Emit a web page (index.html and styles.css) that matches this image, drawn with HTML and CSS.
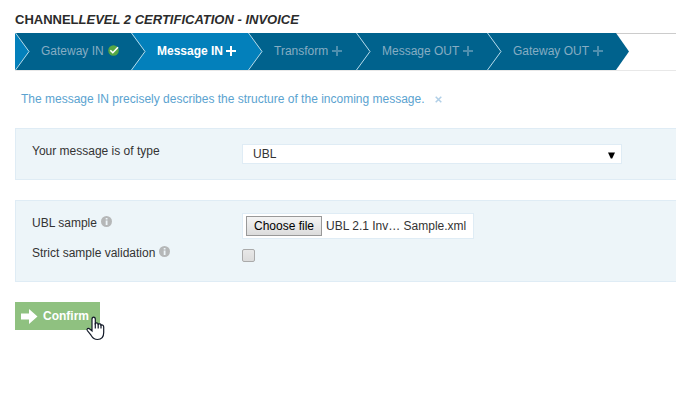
FILE: index.html
```html
<!DOCTYPE html>
<html lang="en">
<head>
<meta charset="utf-8">
<title>Channel</title>
<link rel="stylesheet" href="styles.css">
</head>
<body>
<h1 class="title"><span class="title-kind">CHANNEL</span><em>LEVEL 2 CERTIFICATION - INVOICE</em></h1>
<nav class="steps">
  <div class="step step-gin"><svg class="chevron" viewBox="0 0 15 37"><path class="fill" d="M0 0 14 18.5 0 37z"/><path class="edge" d="M.5 0 14 18.5.5 37"/></svg><span>Gateway IN</span>
    <svg class="check" viewBox="0 0 11 11"><circle cx="5.5" cy="5.5" r="5.3" fill="#56a744"/><path d="M2.3 5.2 4.8 7.7 10 2.3" fill="none" stroke="#fff" stroke-width="1.6"/></svg></div>
  <div class="step step-min active"><svg class="chevron" viewBox="0 0 15 37"><path class="fill" d="M0 0 14 18.5 0 37z"/><path class="edge" d="M.5 0 14 18.5.5 37"/></svg><span>Message IN</span>
    <svg class="plus" viewBox="0 0 10 10"><path d="M5 0v10M0 5h10"/></svg></div>
  <div class="step step-tr"><svg class="chevron" viewBox="0 0 15 37"><path class="fill" d="M0 0 14 18.5 0 37z"/><path class="edge" d="M.5 0 14 18.5.5 37"/></svg><span>Transform</span>
    <svg class="plus" viewBox="0 0 10 10"><path d="M5 0v10M0 5h10"/></svg></div>
  <div class="step step-mout"><svg class="chevron" viewBox="0 0 15 37"><path class="fill dark" d="M0 0 14 18.5 0 37z"/><path class="edge" d="M.5 0 14 18.5.5 37"/></svg><span>Message OUT</span>
    <svg class="plus" viewBox="0 0 10 10"><path d="M5 0v10M0 5h10"/></svg></div>
  <div class="step step-gout"><svg class="chevron" viewBox="0 0 15 37"><path class="fill dark" d="M0 0 14 18.5 0 37z"/><path class="edge" d="M.5 0 14 18.5.5 37"/></svg><span>Gateway OUT</span>
    <svg class="plus" viewBox="0 0 10 10"><path d="M5 0v10M0 5h10"/></svg></div>
  <svg class="tip" viewBox="0 0 14 37"><path d="M0 0 13 18.5 0 37z" fill="#00628d"/></svg>
</nav>
<p class="hint"><span class="hint-text">The message IN precisely describes the structure of the incoming message.</span><svg class="close" viewBox="0 0 7 7"><path d="M.7.7 6.3 6.3M6.3.7.7 6.3"/></svg></p>
<section class="panel panel-type">
  <span class="label label-type">Your message is of type</span>
  <div class="select"><span>UBL</span><svg class="caret" viewBox="0 0 7 7"><path d="M0 .5h7L4.2 6.5H2.8z"/></svg></div>
</section>
<section class="panel panel-sample">
  <div class="row row-file">
    <span class="label"><span class="label-ubl">UBL sample</span><svg class="info" viewBox="0 0 11 11"><circle cx="5.5" cy="5.5" r="5.5" fill="#b5b7b8"/><path d="M4.7 2h1.8v1.5H4.700zM4.700 4.500h1.800V9H4.700z" fill="#edf5f9"/></svg></span>
    <div class="file"><span class="file-button">Choose file</span><span class="file-name">UBL 2.1 Inv… Sample.xml</span></div>
  </div>
  <div class="row row-strict">
    <span class="label"><span class="label-strict">Strict sample validation</span><svg class="info" viewBox="0 0 11 11"><circle cx="5.5" cy="5.5" r="5.5" fill="#b5b7b8"/><path d="M4.7 2h1.8v1.5H4.700zM4.700 4.500h1.800V9H4.700z" fill="#edf5f9"/></svg></span>
    <span class="checkbox"></span>
  </div>
</section>
<div class="confirm"><svg class="arrow" viewBox="0 0 17 15"><path d="M0 4.5h8V0l8.500 7.500L8 15v-4.500H0z" fill="#fff"/></svg><span>Confirm</span>
  <svg class="cursor" viewBox="0 0 19 25"><path d="M6 15V3.200C6 .3 9.300.3 9.300 3.200V7.500C10.500 6.500 12 7 12.200 8.200 13.500 7.400 14.800 8 15 9.100 16.500 8.500 17.700 9.300 17.700 11V16.500C17.700 20.800 15.500 23.500 11.500 23.500 8 23.500 6.500 21.800 5 19.200L1.300 14.500C.3 12.800 2.300 11.500 3.800 13z" fill="#fff" stroke="#111827" stroke-width="1.2"/><path d="M9.300 7v5.500M12.200 8v4.500M15 9v3.500" fill="none" stroke="#111827" stroke-width="1.200"/></svg></div>
</body>
</html>
```
FILE: styles.css
```css
* { box-sizing: border-box; }
body {
  margin: 0;
  min-height: 402px;
  padding: 10px 0 0 15px;
  background: #fff;
  color: #333;
  font: 12px/16px "Liberation Sans", Arial, sans-serif;
  white-space: nowrap;
}
svg { display: block; flex: none; overflow: visible; }
.title { margin: 0; height: 23px; font: bold 13px/19px "Liberation Sans", Arial, sans-serif; color: #2b2b2b; }
.steps { display: flex; height: 38px; border-top: 1px solid #ccc; border-bottom: 1px solid #e8e8e8; }
.step {
  position: relative;
  display: flex;
  align-items: center;
  height: 37px;
  margin-top: -1px;
  padding-bottom: 2px;
  padding-left: 26px;
  background: #00628d;
  color: #86adc3;
}
.chevron { position: absolute; left: 0; top: 0; width: 15px; height: 37px; }
.fill { fill: #0380bb; }
.step-min .fill, .fill.dark { fill: #00628d; }
.edge { fill: none; stroke: #b7dcec; stroke-width: 1; }
.step-gin { width: 116px; }
.step-min { width: 117px; }
.step-tr { width: 108px; }
.step-mout { width: 131px; }
.step-gout { width: 129px; }
.active { background: #0380bb; color: #fff; font-weight: bold; }
.check { width: 11px; height: 11px; margin-left: 4px; }
.plus { width: 10px; height: 10px; margin-left: 4px; fill: none; stroke: #4e8fae; stroke-width: 2; }
.active .plus { stroke: #fff; margin-left: 3px; }
.tip { width: 14px; height: 37px; margin-top: -1px; }
.hint { display: flex; align-items: center; margin: 20px 0 0 6px; height: 16px; color: #5ba3d0; }
.close { width: 7px; height: 7px; margin: 1px 0 0 10px; fill: none; stroke: #b0cfe7; stroke-width: 1.500; }
.panel { border: 1px solid #dfecf5; border-right: 0; background: #edf5f9; }
.panel-type { display: flex; height: 52px; margin-top: 21px; padding: 15px 0 0 16px; }
.label { display: flex; width: 210px; height: 16px; flex: none; margin-top: -1px; }
.select {
  display: flex;
  align-items: center;
  justify-content: space-between;
  width: 380px;
  height: 20px;
  padding: 0 6px 0 10px;
  border: 1px solid #dfecf5;
  background: #fff;
}
.caret { width: 7px; height: 7px; margin-top: 2px; fill: #000; }
.panel-sample { height: 82px; margin-top: 20px; padding: 12px 0 0 16px; }
.row { display: flex; }
.row-file { height: 36px; }
.row-file .label { margin-top: 2px; }
.row-strict .label { margin-top: -4px; }
.info { width: 11px; height: 11px; margin: 1px 0 0 4px; }
.file { display: flex; align-items: center; width: 232px; height: 26px; padding-left: 3px; border: 1px solid #dfecf5; background: #fff; }
.file-button {
  width: 76px;
  height: 20px;
  border: 1px solid #999;
  background: linear-gradient(#f4f4f4, #dcdcdc);
  color: #000;
  line-height: 18px;
  padding-left: 7px;
}
.file-name { margin-left: 4px; }
.checkbox { width: 13px; height: 13px; border: 1px solid #aaa; border-radius: 2px; background: linear-gradient(#e8e8e8, #dcdcdc); }
.confirm { position: relative; display: flex; align-items: center; width: 85px; height: 28px; margin-top: 20px; padding-left: 6px; background: #8fc180; color: #fff; font-weight: bold; }
.arrow { width: 17px; height: 15px; margin-right: 5px; }
.cursor { position: absolute; left: 71px; top: 14px; width: 19px; height: 25px; }
```
